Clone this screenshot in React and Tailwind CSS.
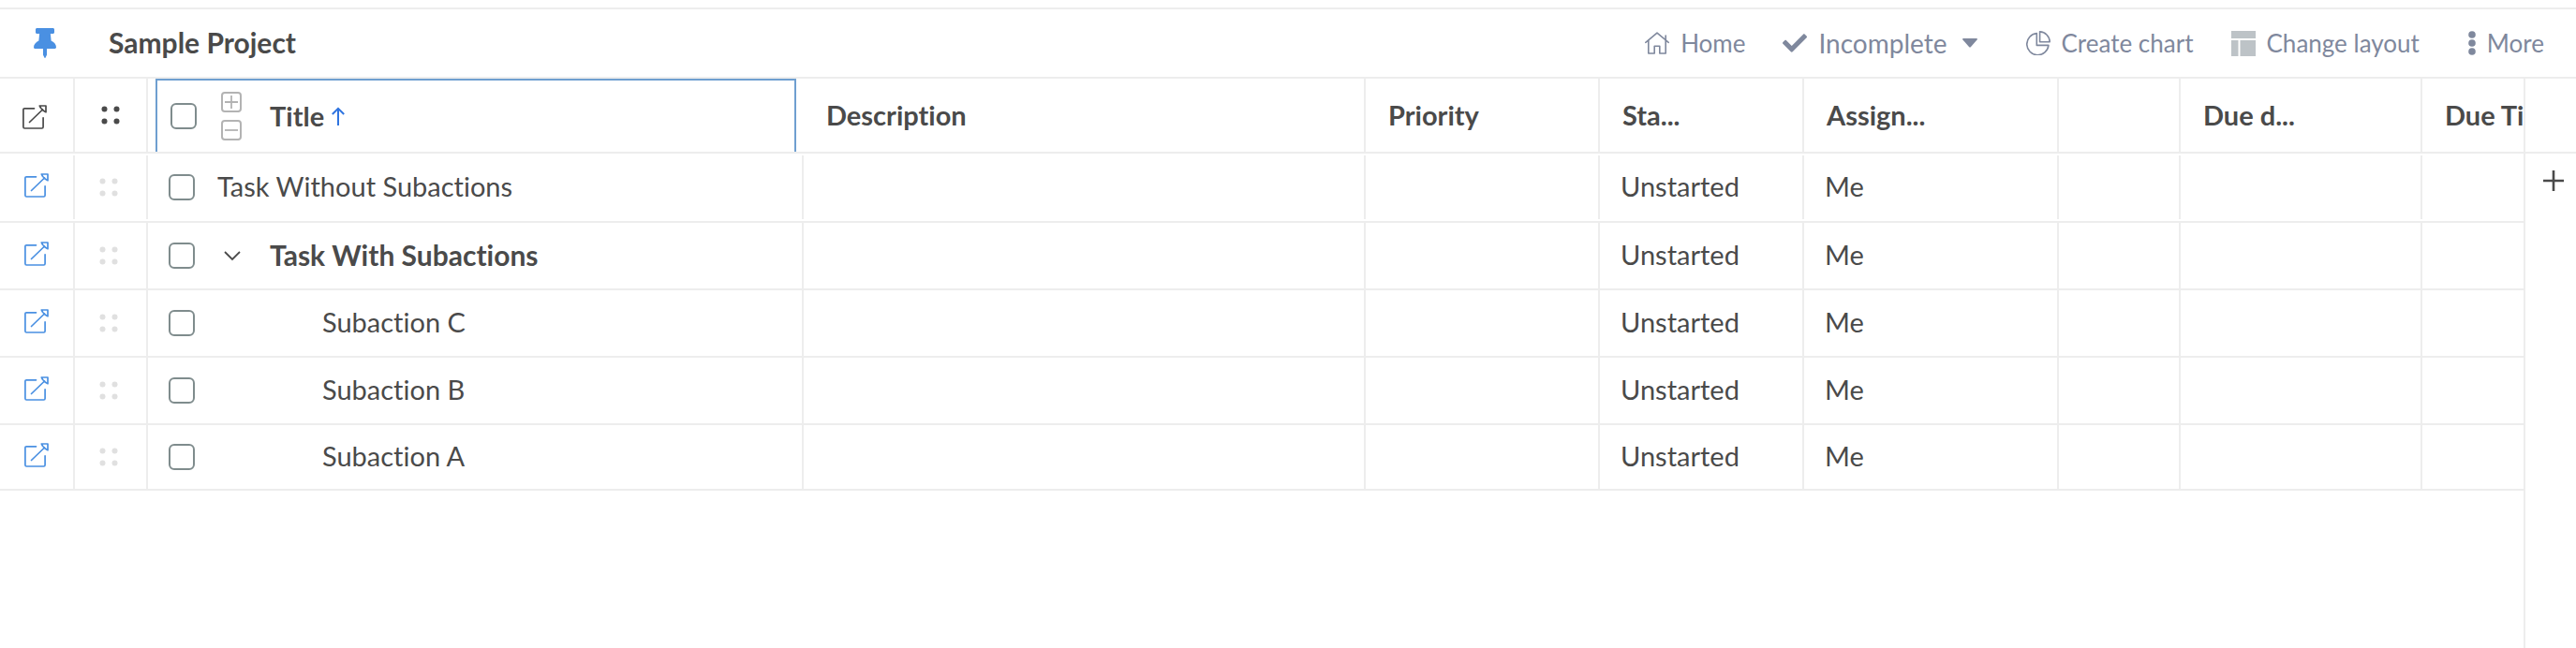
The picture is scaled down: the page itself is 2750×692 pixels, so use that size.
import { FaCheck, FaThumbtack } from 'react-icons/fa'
import { clsx } from 'clsx'

const tasks = [
  { id: 1, title: 'Task Without Subactions', status: 'Unstarted', assignee: 'Me', level: 0, height: 'h-[68px]' },
  { id: 2, title: 'Task With Subactions', status: 'Unstarted', assignee: 'Me', level: 0, height: 'h-[70px]', expanded: true },
  { id: 3, title: 'Subaction C', status: 'Unstarted', assignee: 'Me', level: 2, height: 'h-[70px]' },
  { id: 4, title: 'Subaction B', status: 'Unstarted', assignee: 'Me', level: 2, height: 'h-[70px]' },
  { id: 5, title: 'Subaction A', status: 'Unstarted', assignee: 'Me', level: 2, height: 'h-[68px]' },
]

const columns = [
  { key: 'description', label: 'Description', width: 'min-w-[600px]' },
  { key: 'priority', label: 'Priority', width: 'min-w-[250px]' },
  { key: 'status', label: 'Sta...', width: 'min-w-[218px]' },
  { key: 'assignee', label: 'Assign...', width: 'min-w-[272px]' },
  { key: 'flag', label: '', width: 'min-w-[130px]' },
  { key: 'dueDate', label: 'Due d...', width: 'min-w-[258px]' },
  { key: 'dueTime', label: 'Due Time', width: 'min-w-[200px]' },
]

function OpenIcon() {
  return (
    <svg viewBox="0 0 26 26" className="size-[26px]" fill="none" stroke="currentColor" strokeWidth="1.7" strokeLinecap="round" strokeLinejoin="round" aria-hidden="true">
      <path d="M12.5 3.8H2.3Q.9 3.8.9 5.2V23.6Q.9 25 2.3 25H20.7Q22.1 25 22.1 23.6V13.8" />
      <path d="M7.5 18.5L21.5 5" />
      <path d="M18.3 1H25V7.7L22.5 6.3L19.7 3.5Z" />
    </svg>
  )
}

function DragIcon() {
  return (
    <svg viewBox="0 0 20 20" className="size-5" fill="currentColor" aria-hidden="true">
      <circle cx="3.5" cy="3.5" r="3" />
      <circle cx="16.5" cy="3.5" r="3" />
      <circle cx="3.5" cy="16.5" r="3" />
      <circle cx="16.5" cy="16.5" r="3" />
    </svg>
  )
}

function HomeIcon() {
  return (
    <svg viewBox="0 0 26 24" className="h-6 w-[26px]" fill="none" stroke="currentColor" strokeWidth="1.6" strokeLinecap="round" strokeLinejoin="round" aria-hidden="true">
      <path d="M.8 11.3L13 1.2L25.2 11.3" />
      <path d="M3.8 9.5V23H10.2V15.2H15.8V23H22.2V4" />
    </svg>
  )
}

function ChartIcon() {
  return (
    <svg viewBox="0 0 26 26" className="size-[26px]" fill="none" stroke="currentColor" strokeWidth="1.6" strokeLinejoin="round" aria-hidden="true">
      <path d="M11.3 2.6V15.4H23.9A11.6 11.6 0 1 1 11.3 2.6Z" />
      <path d="M14.6.9V11.8H25.2A11 11 0 0 0 14.6.9Z" />
    </svg>
  )
}

function LayoutIcon() {
  return (
    <svg viewBox="0 0 26 27" className="h-[27px] w-[26px] text-[#bdc3c7]" fill="currentColor" aria-hidden="true">
      <path d="M0 0H26V8H0ZM0 10H7.5V27H0ZM9.5 10H26V27H9.5Z" />
    </svg>
  )
}

function MoreIcon() {
  return (
    <svg viewBox="0 0 8 26" className="h-[26px] w-2" fill="currentColor" aria-hidden="true">
      <circle cx="4" cy="4" r="3.8" />
      <circle cx="4" cy="13" r="3.8" />
      <circle cx="4" cy="22" r="3.8" />
    </svg>
  )
}

function Checkbox({ label }) {
  return (
    <input
      type="checkbox"
      aria-label={label}
      className="size-7 shrink-0 appearance-none rounded-md border-2 border-[#7f8c8d] bg-white checked:bg-[#7f8c8d]"
    />
  )
}

function Toolbar() {
  return (
    <header className="mt-2 flex h-[76px] items-center border-y-2 border-[#ededed] pr-[34px] pl-9">
      <button aria-label="Unpin project" className="text-[#4a90e2]">
        <FaThumbtack className="h-8 w-6" />
      </button>
      <h1 className="ml-14 pb-0.5 text-[30px] leading-9 font-bold">Sample Project</h1>

      <nav className="ml-auto flex items-center gap-10 text-[26px] leading-9 text-[#7f889d]">
        <a href="#home" className="flex items-center gap-3">
          <HomeIcon />
          Home
        </a>
        <button className="flex items-center gap-3 text-[28px]">
          <FaCheck className="size-[26px]" />
          Incomplete
          <svg viewBox="0 0 16 10" className="ml-1 h-2.5 w-4" fill="currentColor" aria-hidden="true">
            <path d="M1 0H15Q16.5.4 15.6 1.500L9 9Q8 10 7 9L.4 1.500Q-.5.4 1 0Z" />
          </svg>
        </button>
        <button className="ml-3 flex items-center gap-3">
          <ChartIcon />
          Create chart
        </button>
        <button className="flex items-center gap-3">
          <LayoutIcon />
          Change layout
        </button>
        <button className="ml-3 flex items-center gap-3">
          <MoreIcon />
          More
        </button>
      </nav>
    </header>
  )
}

function HeaderRow() {
  return (
    <tr>
      <th className="min-w-20 border-b-2 border-[#ededed] p-0">
        <div className="flex h-[78px] items-center justify-center border-r-2 border-[#ededed] pt-1 pr-1">
          <OpenIcon />
        </div>
      </th>
      <th className="min-w-[78px] border-b-2 border-[#ededed] p-0">
        <div className="flex h-[78px] items-center justify-center border-r-2 border-[#ededed]">
          <DragIcon />
        </div>
      </th>
      <th className="min-w-[700px] border-b-2 border-[#ededed] p-0 px-2" aria-sort="ascending">
        <div className="flex h-[78px] items-center border-2 border-b-0 border-[#6f9fd0] pl-3.5">
          <Checkbox label="Select all tasks" />
          <div className="ml-[26px] flex flex-col gap-2 text-[#b3b3b3]">
            <button aria-label="Expand all" className="flex size-[22px] items-center justify-center rounded-sm border-2 border-current">
              <svg viewBox="0 0 14 14" className="size-3.5" stroke="currentColor" strokeWidth="1.8" aria-hidden="true">
                <path d="M0 7H14M7 0V14" />
              </svg>
            </button>
            <button aria-label="Collapse all" className="flex size-[22px] items-center justify-center rounded-sm border-2 border-current">
              <svg viewBox="0 0 14 14" className="size-3.5" stroke="currentColor" strokeWidth="1.8" aria-hidden="true">
                <path d="M0 7H14" />
              </svg>
            </button>
          </div>
          <button className="ml-[30px] flex items-center gap-2">
            Title
            <svg viewBox="0 0 14 20" className="h-5 w-3.5 text-[#2f74e0]" fill="none" stroke="currentColor" strokeWidth="2" aria-hidden="true">
              <path d="M7 20V2M.8 8L7 1.8L13.2 8" />
            </svg>
          </button>
        </div>
      </th>
      {columns.map((col) => (
        <th key={col.key} className={clsx('border-b-2 border-[#ededed] p-0', col.width)}>
          <div
            className={clsx(
              'flex h-[78px] items-center pl-6 whitespace-nowrap',
              'border-r-2 border-[#ededed]'
            )}
          >
            {col.label}
          </div>
        </th>
      ))}
    </tr>
  )
}

function TaskRow({ task, first }) {
  const cell = clsx('border-b-2 border-[#ededed] p-0', first && 'py-0.5')
  const box = clsx('flex items-center border-r-2 border-[#ededed]', task.height)

  return (
    <tr>
      <td className={cell}>
        <div className={clsx(box, 'justify-center pb-1')}>
          <a href={`#task-${task.id}`} aria-label={`Open ${task.title}`} className="text-[#4a90e2]">
            <OpenIcon />
          </a>
        </div>
      </td>
      <td className={cell}>
        <div className={clsx(box, 'justify-center pr-1 text-[#e0e0e0]')}>
          <DragIcon />
        </div>
      </td>
      <td className={cell}>
        <div className={clsx(box, 'pl-[22px]')}>
          <Checkbox label={`Select ${task.title}`} />
          {task.expanded && (
            <button aria-label="Collapse subactions" className="ml-6 flex w-8 justify-center">
              <svg viewBox="0 0 18 12" className="h-3 w-[18px]" fill="none" stroke="currentColor" strokeWidth="1.8" aria-hidden="true">
                <path d="M1 2L9 10L17 2" />
              </svg>
            </button>
          )}
          <span className={clsx('pb-0.5', task.level === 2 ? 'ml-[136px]' : 'ml-6', task.expanded && 'text-[30px] font-bold')}>
            {task.title}
          </span>
        </div>
      </td>
      {columns.map((col) => (
        <td key={col.key} className={cell}>
          <div className={clsx(box, 'pb-0.5 pl-[22px]')}>{task[col.key]}</div>
        </td>
      ))}
    </tr>
  )
}

export default function App() {
  return (
    <div className="flex min-h-screen flex-col bg-white font-['Lato',sans-serif] text-[#4a4a4a] [font-variant-ligatures:none]">
      <Toolbar />
      <main className="flex flex-1">
        <div className="min-w-0 flex-1 overflow-hidden">
          <table className="min-w-full border-separate border-spacing-0 text-left text-[29px] leading-9">
            <thead className="font-bold">
              <HeaderRow />
            </thead>
            <tbody>
              {tasks.map((task, i) => (
                <TaskRow key={task.id} task={task} first={i === 0} />
              ))}
            </tbody>
          </table>
        </div>
        <aside className="w-14 shrink-0 border-l-2 border-[#ededed]">
          <div className="h-20 border-b-2 border-[#ededed]" />
          <button aria-label="Add column" className="flex h-[58px] w-full items-center justify-center pl-1.5">
            <svg viewBox="0 0 24 24" className="size-6" stroke="currentColor" strokeWidth="2.6" aria-hidden="true">
              <path d="M1 12H23M12 1V23" />
            </svg>
          </button>
        </aside>
      </main>
    </div>
  )
}
